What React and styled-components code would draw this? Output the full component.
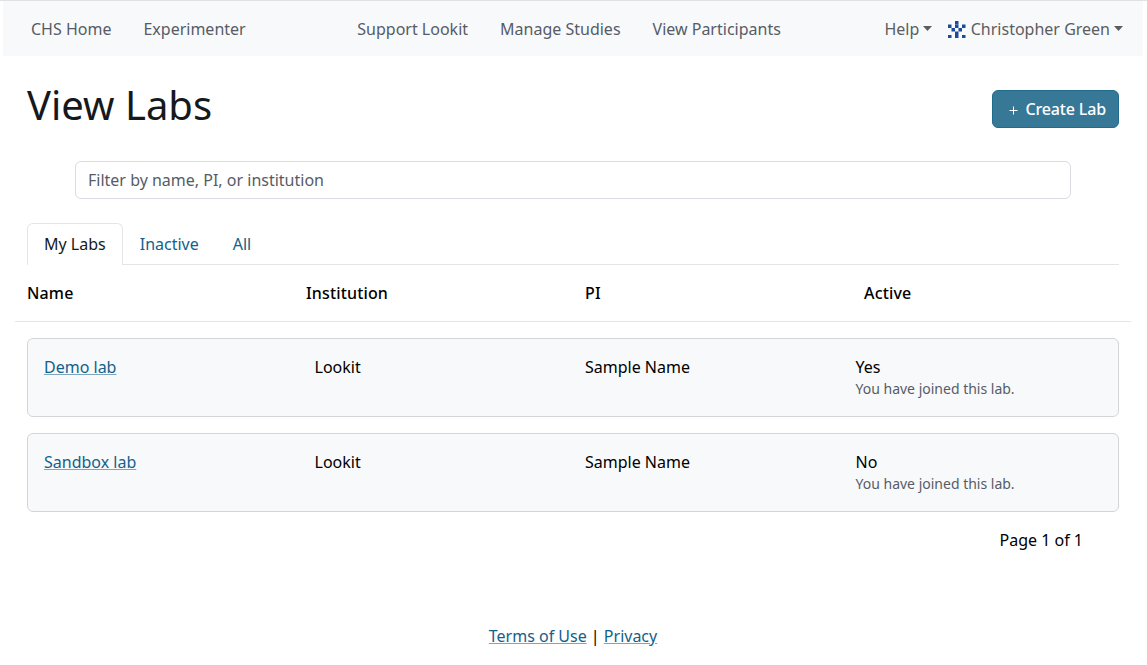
import React from "react";
import styled, { createGlobalStyle } from "styled-components";

const GlobalStyle = createGlobalStyle`
  *, *::before, *::after { box-sizing: border-box; }
  body {
    margin: 0;
    background: #fff;
    color: #000;
    font-family: "Noto Sans", "Liberation Sans", sans-serif;
    font-size: 16px;
    line-height: 24px;
  }
`;

const Page = styled.div`
  height: 665px;
  border-top: 1px solid #dfe1e5;
  padding: 0 4px 0 3px;
  overflow: hidden;
`;

const Navbar = styled.nav`
  display: flex;
  align-items: center;
  height: 55px;
  padding: 0 20px 0 28px;
  background: #f8f9fb;
`;

const NavGroup = styled.div`
  display: flex;
  gap: ${(p) => p.$gap || "32px"};
  margin-left: ${(p) => p.$start || "0"};
`;

const NavLink = styled.a`
  display: inline-flex;
  align-items: center;
  color: ${(p) => (p.$menu ? "#5c5d60" : "#565c66")};
  white-space: nowrap;
`;

const Caret = styled.svg`
  width: 9px;
  height: 5px;
  margin: -1px 0 0 4px;
  fill: currentColor;
`;

const Avatar = styled.svg`
  width: 17.5px;
  height: 17.5px;
  margin: 2px 5px 0 0;
`;

const Content = styled.main`
  padding: 0 24px;
`;

const TitleRow = styled.header`
  display: flex;
  justify-content: space-between;
  align-items: center;
  margin-top: 25px;
  height: 48px;
`;

const Title = styled.h1`
  margin: 0;
  color: #16191c;
  font-size: 40px;
  font-weight: 400;
  line-height: 48px;
`;

const CreateButton = styled.button`
  display: flex;
  align-items: center;
  gap: 7px;
  height: 38px;
  margin-top: 7px;
  padding: 0 12px 0 16px;
  border: 1px solid #1f6c8f;
  border-radius: 6px;
  background: #387897;
  color: #fff;
  font: 500 16px "Noto Sans", sans-serif;
  letter-spacing: -0.15px;
`;

const PlusIcon = styled.svg`
  width: 9px;
  height: 9px;
  margin-top: 3px;
`;

const Filter = styled.input`
  display: block;
  width: 996px;
  height: 38px;
  margin: 32px 0 0 48px;
  padding: 0 12px;
  border: 1px solid #dadce1;
  border-radius: 6px;
  background: #fff;
  font: 400 16px "Noto Sans", sans-serif;
  &::placeholder { color: #565c66; opacity: 1; }
`;

const Tabs = styled.div`
  display: flex;
  height: 42px;
  margin-top: 24px;
  border-bottom: 1px solid #e3e5e8;
`;

const Tab = styled.a`
  height: 42px;
  padding: 8px 16px;
  border: 1px solid ${(p) => (p.$active ? "#e3e5e8" : "transparent")};
  border-bottom: 0;
  border-radius: 6px 6px 0 0;
  background: ${(p) => (p.$active ? "#fff" : "transparent")};
  color: ${(p) => (p.$active ? "#16191c" : "#12618a")};
`;

const HeadRow = styled.div`
  display: grid;
  grid-template-columns: repeat(4, 279px);
  height: 57px;
  margin: 0 -12px;
  padding: 16px 0 0 12px;
  border-bottom: 1px solid #e3e5e8;
  font-weight: 500;
  letter-spacing: 0.15px;
`;

const LabCard = styled.section`
  display: grid;
  grid-template-columns: repeat(4, 270.5px);
  height: 79px;
  margin-top: 16px;
  padding: 16px 16px 0;
  border: 1px solid #d3d5d8;
  border-radius: 6px;
  background: #f8f9fb;
`;

const Link = styled.a`
  color: #12618a;
  text-decoration: underline;
  text-decoration-color: #7fa5bd;
`;

const Note = styled.div`
  margin-top: -1px;
  color: #565c66;
  font-size: 14px;
  line-height: 21px;
`;

const Pager = styled.div`
  margin-top: 16px;
  padding-right: 36px;
  text-align: right;
`;

const Footer = styled.footer`
  margin-top: 72px;
  text-align: center;
`;

const labs = [
  { name: "Demo lab", active: "Yes" },
  { name: "Sandbox lab", active: "No" },
];

const avatarCells = [
  [2, 0], [0, 1], [2, 1], [4, 1], [1, 2], [3, 2], [2, 3], [0, 4], [2, 4], [4, 4],
];

const DropdownCaret = () => (
  <Caret viewBox="0 0 9 5">
    <path d="M0 0h9L4.5 5z" />
  </Caret>
);

export default function App() {
  return (
    <Page>
      <GlobalStyle />
      <Navbar>
        <NavGroup>
          <NavLink>CHS Home</NavLink>
          <NavLink>Experimenter</NavLink>
        </NavGroup>
        <NavGroup $start="111.6px">
          <NavLink>Support Lookit</NavLink>
          <NavLink>Manage Studies</NavLink>
          <NavLink>View Participants</NavLink>
        </NavGroup>
        <NavGroup $start="auto" $gap="16px">
          <NavLink $menu>Help<DropdownCaret /></NavLink>
          <NavLink $menu>
            <Avatar viewBox="0 0 5 5" fill="#1d4b9c">
              {avatarCells.map(([x, y]) => (
                <rect key={`${x}-${y}`} x={x} y={y} width="1" height="1" />
              ))}
            </Avatar>
            Christopher Green<DropdownCaret />
          </NavLink>
        </NavGroup>
      </Navbar>
      <Content>
        <TitleRow>
          <Title>View Labs</Title>
          <CreateButton>
            <PlusIcon viewBox="0 0 9 9" stroke="#fff" strokeWidth="1">
              <path d="M4.5 0.5v8M0.5 4.5h8" />
            </PlusIcon>
            Create Lab
          </CreateButton>
        </TitleRow>
        <Filter placeholder="Filter by name, PI, or institution" />
        <Tabs>
          <Tab $active>My Labs</Tab>
          <Tab>Inactive</Tab>
          <Tab>All</Tab>
        </Tabs>
        <HeadRow>
          <span>Name</span>
          <span>Institution</span>
          <span>PI</span>
          <span>Active</span>
        </HeadRow>
        {labs.map((lab) => (
          <LabCard key={lab.name}>
            <div><Link>{lab.name}</Link></div>
            <div>Lookit</div>
            <div>Sample Name</div>
            <div>
              {lab.active}
              <Note>You have joined this lab.</Note>
            </div>
          </LabCard>
        ))}
        <Pager>Page 1 of 1</Pager>
        <Footer>
          <Link>Terms of Use</Link> | <Link>Privacy</Link>
        </Footer>
      </Content>
    </Page>
  );
}
